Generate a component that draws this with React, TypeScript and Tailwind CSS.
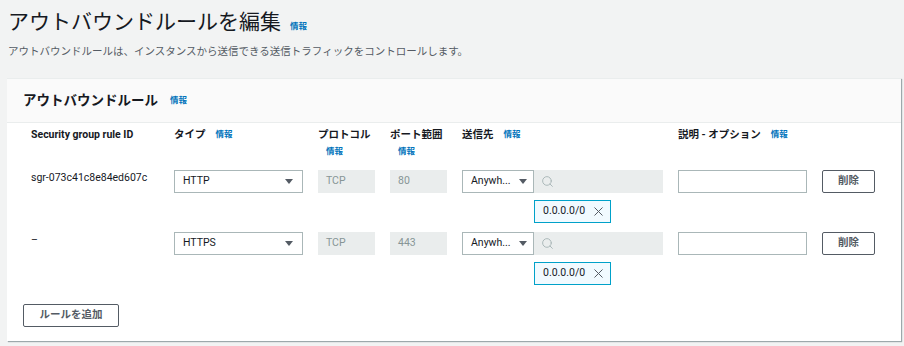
import { Search, X } from "lucide-react";

const font = "font-['Roboto','Noto_Sans_CJK_JP',sans-serif]";

function Info({ className = "" }: { className?: string }) {
  return (
    <span className={`text-[8.5px] font-bold leading-none text-[#0073bb] ${className}`}>情報</span>
  );
}

function Caret() {
  return (
    <svg width="8" height="5" viewBox="0 0 8 5" className="shrink-0">
      <path d="M0 0h8L4 5z" fill="#545b64" />
    </svg>
  );
}

function TypeSelect({ value }: { value: string }) {
  return (
    <div className="flex h-[23px] w-[129px] items-center justify-between border border-[#aab7b8] bg-white pl-[8px] pr-[9px] text-[10.5px] text-[#16191f]">
      <span>{value}</span>
      <Caret />
    </div>
  );
}

function ReadOnly({ value }: { value: string }) {
  return (
    <div className="flex h-[23px] w-[57px] items-center bg-[#eaeded] pl-[8px] text-[10.5px] text-[#879596]">
      {value}
    </div>
  );
}

function Destination() {
  return (
    <div className="flex flex-col gap-[7px]">
      <div className="flex h-[23px]">
        <div className="flex w-[72px] items-center justify-between border border-[#aab7b8] bg-white pl-[8px] pr-[6px] text-[10.5px] text-[#16191f]">
          <span>Anywh...</span>
          <Caret />
        </div>
        <div className="flex w-[129px] items-center bg-[#eaeded] pl-[7px]">
          <Search className="h-[13px] w-[13px] text-[#aab7b8]" strokeWidth={1.8} />
        </div>
      </div>
      <div className="ml-[72px] flex h-[23px] w-[77px] items-center justify-between border border-[#00a1c9] bg-[#f1faff] pl-[8px] pr-[4px] text-[10.5px] text-[#16191f]">
        <span>0.0.0.0/0</span>
        <X className="h-[15px] w-[15px] text-[#545b64]" strokeWidth={1.6} />
      </div>
    </div>
  );
}

function RuleRow({ id, type, port }: { id: string; type: string; port: string }) {
  return (
    <div className="flex gap-[15px]">
      <div className="w-[128px] text-[10.5px] leading-[15px] text-[#16191f]">{id}</div>
      <TypeSelect value={type} />
      <ReadOnly value="TCP" />
      <ReadOnly value={port} />
      <div className="w-[201px]">
        <Destination />
      </div>
      <div className="h-[23px] w-[129px] border border-[#aab7b8] bg-white" />
      <button className="flex h-[23px] w-[53px] items-center justify-center rounded-[2px] border border-[#545b64] bg-white text-[10.5px] font-bold text-[#545b64]">
        削除
      </button>
    </div>
  );
}

export default function App() {
  return (
    <div className={`min-h-[346px] bg-[#f2f3f3] pl-[7px] pr-[3px] ${font}`}>
      <div className="flex items-baseline gap-[9px] pl-[1px] pt-[7px]">
        <h1 className="text-[21px] font-normal leading-[30px] text-[#16191f]">アウトバウンドルールを編集</h1>
        <Info />
      </div>
      <p className="mt-[7px] pl-[1px] text-[10.5px] leading-[15px] text-[#545b64]">
        アウトバウンドルールは、インスタンスから送信できる送信トラフィックをコントロールします。
      </p>

      <div className="mt-[19px] border-t border-[#eaeded] bg-white shadow-[1px_1px_1px_0_rgba(0,28,36,0.35)]">
        <div className="flex h-[44px] items-center gap-[12px] border-b border-[#eaeded] bg-[#fafafa] pl-[16px]">
          <h2 className="text-[13.5px] font-bold leading-none text-[#16191f]">アウトバウンドルール</h2>
          <Info />
        </div>

        <div className="pl-[24px] pt-[4px]">
          <div className="flex items-start gap-[15px] text-[10.5px] font-bold leading-[15px] text-[#16191f]">
            <div className="w-[128px]">Security group rule ID</div>
            <div className="flex w-[129px] items-start gap-[10px]">
              <span>タイプ</span>
              <Info className="mt-[3px]" />
            </div>
            <div className="flex w-[57px] flex-col">
              <span>プロトコル</span>
              <Info className="ml-[8px] mt-[5px]" />
            </div>
            <div className="flex w-[57px] flex-col">
              <span>ポート範囲</span>
              <Info className="ml-[8px] mt-[5px]" />
            </div>
            <div className="flex w-[201px] items-start gap-[10px]">
              <span>送信先</span>
              <Info className="mt-[3px]" />
            </div>
            <div className="flex w-[129px] items-start gap-[10px] whitespace-nowrap">
              <span>説明 - オプション</span>
              <Info className="mt-[3px]" />
            </div>
          </div>

          <div className="mt-[14px] flex flex-col gap-[9px]">
            <RuleRow id="sgr-073c41c8e84ed607c" type="HTTP" port="80" />
            <RuleRow id="–" type="HTTPS" port="443" />
          </div>
        </div>

        <div className="pb-[14px] pl-[16px] pt-[19px]">
          <button className="flex h-[23px] w-[96px] items-center justify-center rounded-[2px] border border-[#545b64] bg-white text-[10.5px] font-bold text-[#545b64]">
            ルールを追加
          </button>
        </div>
      </div>
    </div>
  );
}
